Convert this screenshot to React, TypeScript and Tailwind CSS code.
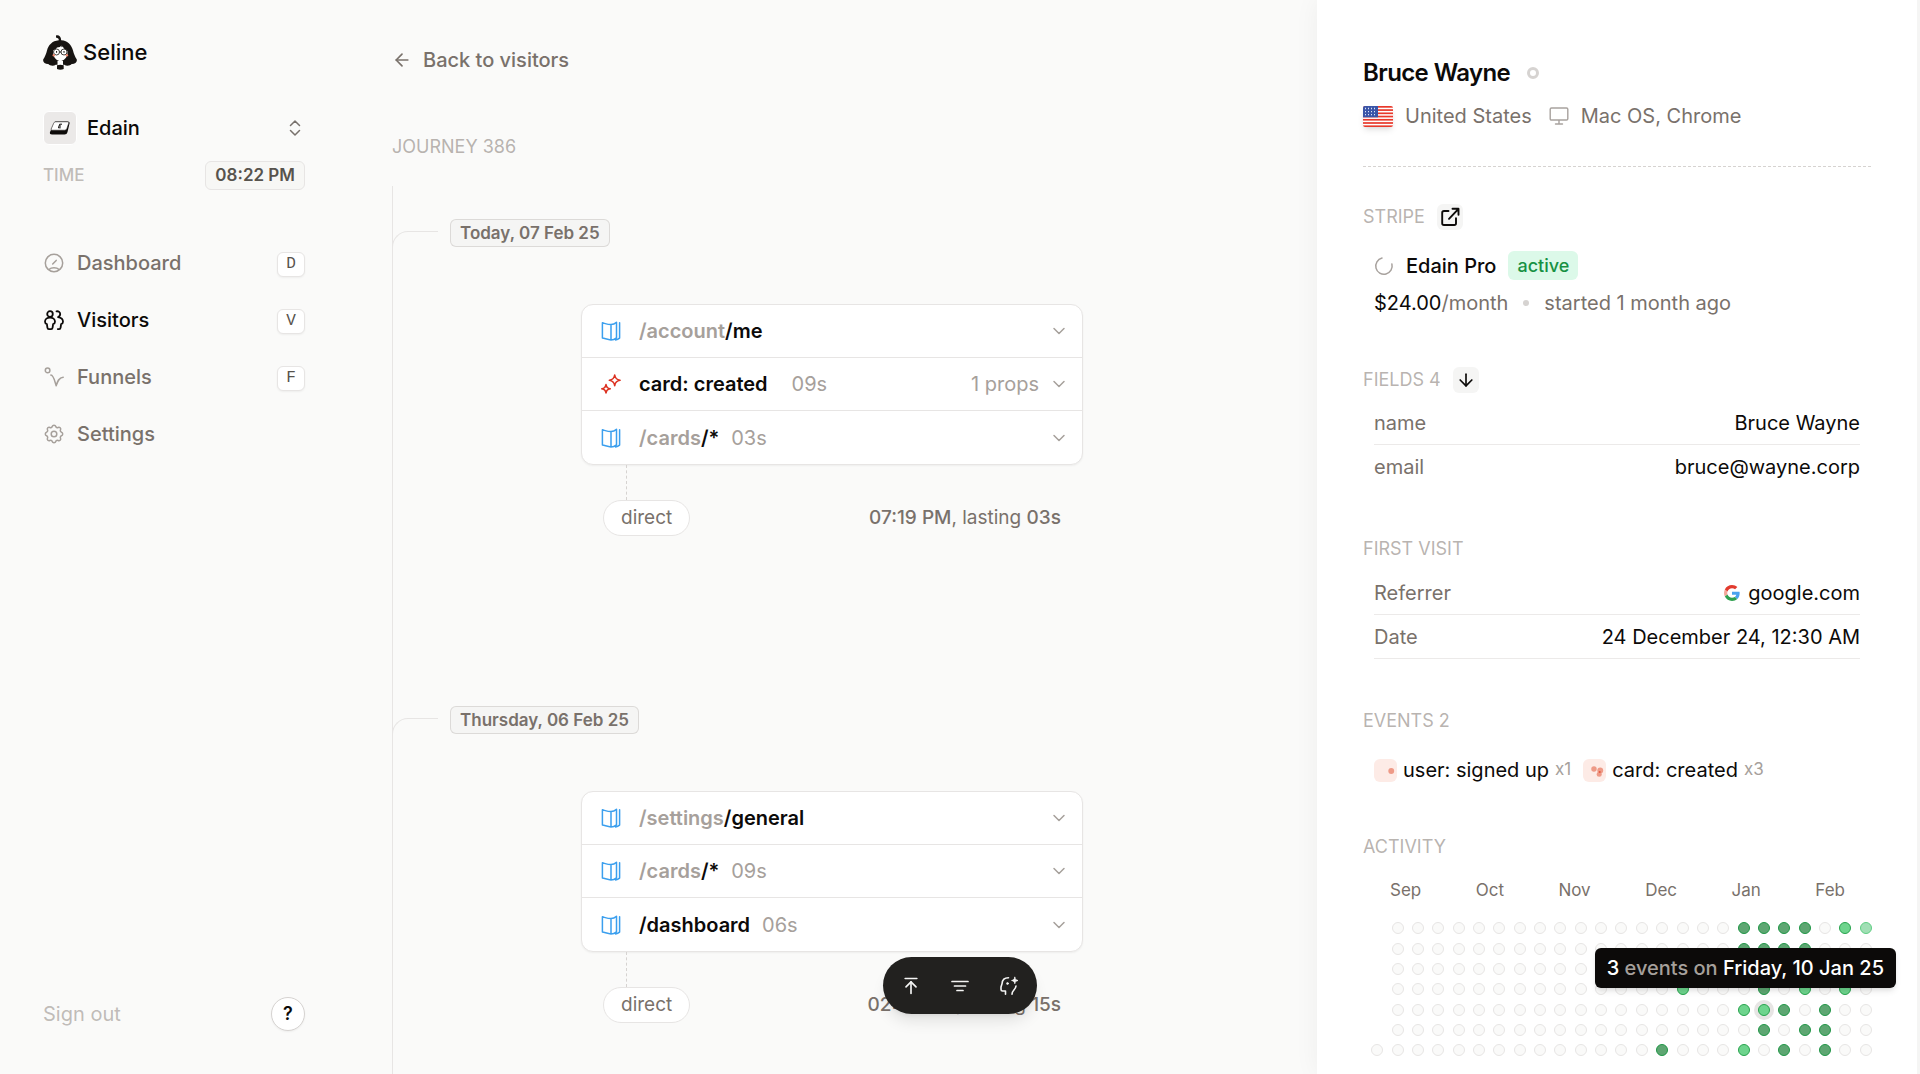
import type { ReactNode } from 'react';
import { ArrowDown, ArrowLeft, ArrowUpToLine, ChevronDown } from 'lucide-react';

type Level = '.' | '-' | 'l' | 'm' | 'd' | 'h';

interface Step {
  kind: 'page' | 'event';
  base?: string;
  name: string;
  time?: string;
  props?: string;
}

interface Day {
  label: string;
  steps: Step[];
  at: string;
  lasting: string;
}

const days: Day[] = [
  {
    label: 'Today, 07 Feb 25',
    steps: [
      { kind: 'page', base: '/account', name: '/me' },
      { kind: 'event', name: 'card: created', time: '09s', props: '1 props' },
      { kind: 'page', base: '/cards', name: '/*', time: '03s' },
    ],
    at: '07:19 PM',
    lasting: '03s',
  },
  {
    label: 'Thursday, 06 Feb 25',
    steps: [
      { kind: 'page', base: '/settings', name: '/general' },
      { kind: 'page', base: '/cards', name: '/*', time: '09s' },
      { kind: 'page', name: '/dashboard', time: '06s' },
    ],
    at: '02:45 PM',
    lasting: '15s',
  },
];

const months = ['Sep', 'Oct', 'Nov', 'Dec', 'Jan', 'Feb'];

// one string per weekday, one character per week
const activity = [
  '.-----------------dddd-ml',
  '.-----------------dddd---',
  '.------------------------',
  '.--------------m---d-m-m-',
  '.-----------------mhd-d--',
  '.------------------d-dd--',
  '--------------d---m-d-d--',
];

const levelStyles: Record<Level, string> = {
  '.': 'invisible',
  '-': 'border-stone-200 bg-stone-50',
  l: 'border-[#5fce83] bg-[#a1dfb5]',
  m: 'border-[#27a34d] bg-[#6ed48d]',
  d: 'border-[#1f9646] bg-[#5ea672]',
  h: 'border-[#27a34d] bg-[#6ed48d] ring-4 ring-stone-200',
};

function Logo() {
  return (
    <svg viewBox="0 0 34 35" className="h-[35px] w-[34px]">
      <path d="M13 .6c2.400-1 5 .6 5.200 4.600C25 5.600 28.500 10 30 15.500c.9 3.400 1.800 6 3.700 8.800.9 2.600-1.800 5-5 4.800-1.700 2-5.400 2.200-7.500.7h-8.400c-2.100 1.500-5.800 1.300-7.500-.7-3.200.2-5.900-2.200-5-4.800C2.200 21.500 3.100 18.900 4 15.500 5.400 10.300 9 5.900 15.800 5.300 15.900 3.200 14.500 3.400 13 2.600z" fill="#171412" />
      <path d="M10 15.500c1.500-.3 3-1.500 4-3l3-.5 1.300-1.500.2 1.700 1.300-.7c.7 1.800 2.200 3.500 4.700 4.500.3 3.500-.8 6.300-3 8.300-2.600 2.400-5.800 2.400-8.500 0-2.200-2-3.300-5.300-3-8.800z" fill="#fff" />
      <path d="M14.500 26H20v4.500h-5.500z" fill="#fff" />
      <circle cx="13.500" cy="17" r="3" fill="#fff" stroke="#171412" strokeWidth="0.8" />
      <circle cx="21" cy="17" r="3" fill="#fff" stroke="#171412" strokeWidth="0.8" />
      <path d="M16.500 17H18M13.600 16v1.800M21 16v1.800" stroke="#171412" />
      <circle cx="10.800" cy="20.300" r="1.200" fill="#f08a70" />
      <circle cx="23.900" cy="20.300" r="1.200" fill="#f08a70" />
      <path d="M14 30.300c2-.8 4.500-.8 6.700 0V34c-2 1-4.700 1-6.700 0z" fill="#171412" />
    </svg>
  );
}

function KeycapIcon() {
  return (
    <svg viewBox="0 0 22 16" className="w-[22px]">
      <path d="M6 1.500h12.500c1.500 0 2.300.7 2 2L18.500 12c-.4 1.700-1.500 2.500-3 2.500H3c-1.700 0-2.500-.8-2-2.500z" fill="#0c0a09" />
      <path d="M6.700 1.800h11.600c1.200 0 1.700.5 1.400 1.500l-1.900 5.500c-.3.900-1 1.400-2 1.400H3.200c-.9 0-1.300-.5-1-1.300l2.500-5.700c.3-.9 1-1.400 2-1.400z" fill="#fff" stroke="#292524" strokeWidth="0.6" />
      <path d="M13 4.200h-2.300L9.400 7.800h2.300M10.200 6H12" stroke="#0c0a09" fill="none" />
    </svg>
  );
}

function NavIcon({ children }: { children: ReactNode }) {
  return (
    <svg viewBox="0 0 20 20" className="size-5 shrink-0" fill="none" stroke="currentColor" strokeWidth="1.5" strokeLinecap="round" strokeLinejoin="round">
      {children}
    </svg>
  );
}

const nav = [
  {
    label: 'Dashboard',
    hotkey: 'D',
    icon: (
      <NavIcon>
        <circle cx="10" cy="10" r="8.700" />
        <path d="M8.700 11l3.500-3.600M5.300 16.300c2-2.200 7.400-2.200 9.400 0" />
      </NavIcon>
    ),
  },
  {
    label: 'Visitors',
    hotkey: 'V',
    active: true,
    icon: (
      <NavIcon>
        <g strokeWidth="1.8">
          <circle cx="6" cy="4" r="2.800" />
          <path d="M6 7.600c-2.900 0-5 1.700-5 4.200 0 1.200.7 2 1.900 2.300l.5 3.500c.1 1 .7 1.500 1.500 1.500h2.200c.8 0 1.400-.5 1.500-1.500l.5-3.500c1.200-.3 1.900-1.100 1.900-2.300 0-2.500-2.100-4.200-5-4.200z" />
          <path d="M12.500 1.300c2.200-.3 3.700 1 3.700 2.800 0 1.500-.9 2.600-2.200 3 3 .4 5 2.200 5 4.700 0 1.200-.7 2-1.900 2.300l-.5 3.500c-.1 1-.7 1.500-1.500 1.500h-1.300" />
        </g>
      </NavIcon>
    ),
  },
  {
    label: 'Funnels',
    hotkey: 'F',
    icon: (
      <NavIcon>
        <circle cx="3.600" cy="3.400" r="2.300" />
        <path d="M6.900 8.100c2.700.2 3.600 5.400 5.300 10.600 1.200-3.800 2.400-8.100 7-8.500" />
      </NavIcon>
    ),
  },
  {
    label: 'Settings',
    icon: (
      <NavIcon>
        <circle cx="10" cy="10" r="2.800" />
        <path d="M8.200 2.500c.5-1.600 3.100-1.600 3.600 0 .3 1 1.400 1.500 2.300 1 1.500-.8 3.200.9 2.400 2.400-.5.900 0 2 1 2.300 1.600.5 1.600 3.100 0 3.600-1 .3-1.500 1.400-1 2.300.8 1.500-.9 3.200-2.400 2.400-.9-.5-2 0-2.300 1-.5 1.600-3.100 1.600-3.600 0-.3-1-1.400-1.500-2.300-1-1.500.8-3.200-.9-2.400-2.400.5-.9 0-2-1-2.300-1.600-.5-1.600-3.100 0-3.600 1-.3 1.500-1.400 1-2.300-.8-1.500.9-3.200 2.400-2.400.9.500 2 0 2.300-1z" />
      </NavIcon>
    ),
  },
];

function PageIcon() {
  return (
    <svg viewBox="0 0 20 20" className="size-5" fill="none" stroke="#3b9fee" strokeWidth="1.5" strokeLinecap="round" strokeLinejoin="round">
      <path d="M10 3.600C7 3.600 4.400 2.600 1.400 1.800V17c3 .6 5.600 1.900 8.600 1.900M10 3.600c2 0 3.800-.7 5.500-2.300v15.500c-1.700 1.400-3.500 2.100-5.500 2.100zM18.600 1.800v15.300c-1.200 1-2.500 1.600-4 1.800" />
    </svg>
  );
}

function EventIcon() {
  return (
    <svg viewBox="0 0 20 20" className="size-5" fill="none" stroke="#dc3120" strokeWidth="1.6" strokeLinejoin="round">
      <path d="M13.700 1c.5 3.400 1.900 4.800 5.300 5.300-3.400.5-4.800 1.900-5.300 5.300-.5-3.400-1.900-4.800-5.300-5.300C11.800 5.800 13.200 4.400 13.700 1zM5 10.600c.4 2.700 1.500 3.800 4.200 4.200-2.700.4-3.800 1.500-4.200 4.200-.4-2.700-1.500-3.800-4.200-4.200 2.700-.4 3.800-1.500 4.200-4.200z" />
    </svg>
  );
}

function UsFlag() {
  return (
    <svg viewBox="0 0 30 21" className="h-[21px] w-[30px] rounded-xs shadow-md">
      <rect width="30" height="21" fill="#fff" />
      {[0, 1, 2, 3, 4, 5, 6].map((i) => (
        <rect key={i} y={i * 3.23} width="30" height="1.700" fill="#e8392b" />
      ))}
      <rect width="15" height="11.300" fill="#3a55a8" />
      <path d="M2 2.500h12M2 5.600h12M2 8.700h12" stroke="#dbe2f5" strokeWidth="1.3" strokeDasharray="1 2" />
    </svg>
  );
}

function GoogleIcon() {
  return (
    <svg viewBox="0 0 48 48" className="size-4">
      <path fill="#4aa3f0" d="M46.980 24.550c0-1.570-.15-3.090-.38-4.550H24v9.020h12.940c-.58 2.960-2.260 5.480-4.780 7.180l7.730 6c4.510-4.180 7.090-10.360 7.090-17.650z" />
      <path fill="#f3a89b" d="M10.530 28.590c-.48-1.450-.76-2.990-.76-4.590s.27-3.140.76-4.590l-7.980-6.190C.92 16.460 0 20.120 0 24c0 3.880.92 7.540 2.560 10.780l7.970-6.190z" />
      <path fill="#2ea04f" d="M24 48c6.480 0 11.930-2.130 15.890-5.810l-7.730-6c-2.150 1.450-4.920 2.300-8.160 2.300-6.260 0-11.570-4.220-13.470-9.910l-7.980 6.190C6.510 42.620 14.620 48 24 48z" />
      <path fill="#e23b2e" d="M24 9.500c3.540 0 6.710 1.220 9.210 3.600l6.850-6.850C35.900 2.380 30.470 0 24 0 14.620 0 6.510 5.380 2.560 13.220l7.980 6.190C12.430 13.720 17.740 9.500 24 9.500z" />
    </svg>
  );
}

function Sidebar() {
  return (
    <aside className="flex w-[350px] shrink-0 flex-col pt-[34px] pr-[45px] pb-[43px] pl-[43px]">
      <a href="#" className="flex items-center gap-1.5 text-[22px] leading-9 font-medium text-stone-950">
        <Logo />
        Seline
      </a>

      <button className="mt-[41px] flex h-[34px] items-center text-xl font-medium text-stone-950">
        <span className="mr-2.5 flex size-[34px] items-center justify-center rounded-md border border-white bg-stone-200/80">
          <KeycapIcon />
        </span>
        Edain
        <svg viewBox="0 0 12 16" className="mr-1 ml-auto h-4 w-3" fill="none" stroke="#78716c" strokeWidth="1.5" strokeLinecap="round" strokeLinejoin="round">
          <path d="M1.500 5.500L6 1l4.500 4.500M1.500 10.500L6 15l4.500-4.500" />
        </svg>
      </button>

      <div className="mt-4 flex items-center justify-between">
        <span className="text-[17px] font-medium text-stone-400/70">TIME</span>
        <span className="rounded-md border border-stone-200 bg-stone-100/70 px-[9px] text-[17px] leading-[27px] font-semibold text-stone-600">
          08:22 PM
        </span>
      </div>

      <nav className="mt-[59px] flex flex-col gap-[29px]">
        {nav.map((item) => (
          <a
            key={item.label}
            href="#"
            className={`flex h-7 items-center gap-[13px] pl-px text-xl font-medium ${item.active ? 'text-stone-950' : 'text-stone-500'}`}
          >
            <span className={item.active ? '' : 'text-stone-400'}>{item.icon}</span>
            {item.label}
            {item.hotkey && (
              <kbd className="mt-0.5 ml-auto flex h-[25px] w-7 items-center justify-center rounded-md border border-stone-200 bg-white font-['Liberation_Mono',monospace] text-base font-normal text-stone-600 shadow-xs">
                {item.hotkey}
              </kbd>
            )}
          </a>
        ))}
      </nav>

      <div className="mt-auto flex items-center justify-between">
        <button className="text-xl text-stone-400/70">Sign out</button>
        <button className="flex size-[34px] items-center justify-center rounded-full border border-stone-300 bg-white text-lg font-semibold text-stone-950 shadow-xs">
          ?
        </button>
      </div>
    </aside>
  );
}

function StepRow({ step }: { step: Step }) {
  return (
    <button className="flex h-[53px] w-full items-center pr-[13px] pl-[19px] text-xl">
      {step.kind === 'page' ? <PageIcon /> : <EventIcon />}
      <span className="ml-[18px] font-semibold text-stone-950">
        <span className="text-stone-400">{step.base}</span>
        {step.name}
      </span>
      {step.time && (
        <span className={`text-stone-400 ${step.kind === 'event' ? 'ml-6' : 'ml-3'}`}>{step.time}</span>
      )}
      <span className="ml-auto text-stone-400">{step.props}</span>
      <ChevronDown className="ml-2.5 size-5 text-stone-400" strokeWidth={1.8} />
    </button>
  );
}

function DayGroup({ day }: { day: Day }) {
  return (
    <section className="mb-[170px]">
      <div className="flex items-start">
        <span className="mt-3 mr-3 -ml-px h-5 w-[46px] rounded-tl-2xl border-t border-l border-stone-200" />
        <h3 className="rounded-md border border-stone-300/80 bg-stone-100 px-[9px] text-[17px] leading-[26px] font-semibold text-stone-500">
          {day.label}
        </h3>
      </div>
      <div className="mx-auto mt-[53px] max-w-[502px]">
        <div className="divide-y divide-stone-200 rounded-xl border border-stone-200 bg-white shadow-xs">
          {day.steps.map((step) => (
            <StepRow key={step.name} step={step} />
          ))}
        </div>
        <div className="ml-[45px] h-[35px] border-l border-dashed border-stone-300" />
        <div className="flex items-center justify-between px-[22px] text-[19px] text-stone-500">
          <span className="rounded-full border border-stone-200 bg-white px-[17px] leading-[34px]">direct</span>
          <span>
            <span className="font-medium">{day.at}</span>, lasting <span className="font-medium">{day.lasting}</span>
          </span>
        </div>
      </div>
    </section>
  );
}

function Journey() {
  return (
    <main className="flex min-w-0 flex-1 flex-col overflow-hidden pt-[46px] pr-[46px] pl-[42px]">
      <a href="#" className="flex h-7 items-center gap-[11px] text-xl font-medium text-stone-500">
        <ArrowLeft className="size-5" strokeWidth={2} />
        Back to visitors
      </a>
      <h2 className="mt-[63px] text-lg leading-5 text-stone-400/80">JOURNEY 386</h2>
      <div className="mt-[29px] border-l border-stone-200 pt-[33px]">
        {days.map((day) => (
          <DayGroup key={day.label} day={day} />
        ))}
      </div>
    </main>
  );
}

function Toolbar() {
  return (
    <div className="fixed bottom-[60px] left-1/2 flex h-[57px] -translate-x-1/2 items-center gap-[29px] rounded-full bg-[#22211f] px-[18px] text-stone-100 shadow-lg">
      <button aria-label="Scroll to top">
        <ArrowUpToLine className="size-5" strokeWidth={2} />
      </button>
      <button aria-label="Filter">
        <svg viewBox="0 0 20 20" className="size-5" stroke="currentColor" strokeWidth="1.7" strokeLinecap="round">
          <path d="M2 5.500h16M4.500 10h11M7 14.500h6" />
        </svg>
      </button>
      <button aria-label="Ask AI">
        <svg viewBox="0 0 20 20" className="size-5" fill="none" stroke="currentColor" strokeWidth="1.6" strokeLinecap="round" strokeLinejoin="round">
          <path d="M9.500 1.800C5.700 1.800 3.300 4.200 3.100 7.500L2 11v2.500c0 1 .6 1.500 1.500 1.500H6.500v3.200M13 18.200c0-4 3.600-4.200 4-8.200" />
          <path d="M15.800 1.300c.4 2 1.200 2.800 3.200 3.200-2 .4-2.800 1.200-3.200 3.200-.4-2-1.200-2.800-3.200-3.200 2-.4 2.800-1.200 3.200-3.200z" fill="currentColor" strokeWidth="0.8" />
          <circle cx="8.500" cy="7.500" r="1" fill="currentColor" strokeWidth="0.6" />
        </svg>
      </button>
    </div>
  );
}

function SectionTitle({ children }: { children: ReactNode }) {
  return <h3 className="text-lg leading-5 text-stone-400/80">{children}</h3>;
}

function Field({ label, border = true, children }: { label: string; border?: boolean; children: ReactNode }) {
  return (
    <div className={`flex h-11 items-center justify-between border-b ${border ? 'border-stone-200/80' : 'border-transparent'}`}>
      <dt className="text-stone-500">{label}</dt>
      <dd className="flex items-center gap-2 text-stone-950">{children}</dd>
    </div>
  );
}

function Activity() {
  return (
    <section className="mt-[55px]">
      <SectionTitle>ACTIVITY</SectionTitle>
      <div className="mt-[23px] mr-[26px] ml-[27px] flex justify-between text-[17px] leading-5 text-stone-500">
        {months.map((month) => (
          <span key={month}>{month}</span>
        ))}
      </div>
      <div className="relative mt-[18px] -mr-[5px] ml-1">
        <div className="grid grid-cols-[repeat(25,minmax(0,1fr))]">
          {activity.flatMap((row, y) =>
            row.split('').map((level, x) => (
              <span key={`${x}-${y}`} className="flex aspect-square items-center justify-center">
                <span className={`size-3 rounded-full border ${levelStyles[level as Level]}`} />
              </span>
            )),
          )}
        </div>
        <div
          role="tooltip"
          className="absolute top-[30px] -right-5 rounded-md bg-stone-950 px-3 text-xl leading-10 font-medium whitespace-nowrap text-white shadow-md"
        >
          3 <span className="text-stone-400">events on</span> Friday, 10 Jan 25
        </div>
      </div>
    </section>
  );
}

function VisitorPanel() {
  return (
    <aside className="w-[603px] shrink-0 border-r-[3px] border-stone-100 bg-white px-[46px] pt-[58px] text-xl shadow-[0_0_24px_rgba(0,0,0,0.05)]">
      <div className="flex h-[30px] items-center gap-[17px]">
        <h1 className="text-2xl font-semibold tracking-tight text-stone-950">Bruce Wayne</h1>
        <span className="size-3 rounded-full border-[3px] border-stone-300" />
      </div>
      <div className="mt-4 flex h-6 items-center text-stone-500">
        <UsFlag />
        <span className="ml-3">United States</span>
        <svg viewBox="0 0 20 20" className="ml-[17px] size-5" fill="none" stroke="#a8a29e" strokeWidth="1.4" strokeLinecap="round" strokeLinejoin="round">
          <path d="M2.500 2h15c.8 0 1.300.5 1.300 1.300v9.400c0 .8-.5 1.300-1.300 1.300h-15c-.8 0-1.300-.5-1.300-1.300V3.300C1.200 2.500 1.700 2 2.500 2zM10 14v4M6.500 18h7" />
        </svg>
        <span className="ml-3">Mac OS, Chrome</span>
      </div>

      <hr className="mt-[38px] border-dashed border-stone-300" />

      <section className="mt-[37px]">
        <div className="flex items-center gap-3">
          <SectionTitle>STRIPE</SectionTitle>
          <button aria-label="Open in Stripe" className="flex size-[26px] items-center justify-center rounded-md bg-stone-100 text-stone-950">
            <svg viewBox="0 0 20 20" className="size-5" fill="none" stroke="currentColor" strokeWidth="1.9" strokeLinecap="round" strokeLinejoin="round">
              <path d="M8.500 4H4c-1 0-1.800.8-1.800 1.800v10.400c0 1 .8 1.800 1.800 1.800h10.200c1 0 1.800-.8 1.800-1.800v-5M12.500 1.800h6v6M18 2.300l-9 9.500" />
            </svg>
          </button>
        </div>
        <div className="mt-[21px] ml-[11px] flex h-[29px] items-center">
          <svg viewBox="0 0 20 20" className="size-5" fill="none" stroke="#a8a29e" strokeWidth="1.5" strokeLinecap="round">
            <path d="M8 2.100A8.200 8.200 0 1 0 17.900 8" />
          </svg>
          <span className="ml-3 font-medium text-stone-950">Edain Pro</span>
          <span className="ml-3 rounded-md bg-[#dcf9e9] px-[9px] text-lg leading-[29px] font-medium text-[#179143]">active</span>
        </div>
        <div className="mt-[11px] ml-[11px] flex h-6 items-center text-stone-500">
          <span className="text-stone-950">$24.00</span>/month
          <span className="mx-[15px] size-1.5 rounded-full bg-stone-300" />
          started 1 month ago
        </div>
      </section>

      <section className="mt-[52px]">
        <div className="flex items-center gap-3">
          <SectionTitle>FIELDS 4</SectionTitle>
          <button aria-label="Sort fields" className="flex size-[26px] items-center justify-center rounded-md bg-stone-100 text-stone-950">
            <ArrowDown className="size-5" strokeWidth={2} />
          </button>
        </div>
        <dl className="mx-[11px] mt-2">
          <Field label="name">Bruce Wayne</Field>
          <Field label="email" border={false}>bruce@wayne.corp</Field>
        </dl>
      </section>

      <section className="mt-[50px]">
        <SectionTitle>FIRST VISIT</SectionTitle>
        <dl className="mx-[11px] mt-3">
          <Field label="Referrer">
            <GoogleIcon />
            google.com
          </Field>
          <Field label="Date">24 December 24, 12:30 AM</Field>
        </dl>
      </section>

      <section className="mt-[52px]">
        <SectionTitle>EVENTS 2</SectionTitle>
        <ul className="mt-[27px] ml-[11px] flex h-6 items-center gap-3 text-stone-950">
          <li className="flex items-center gap-1.5">
            <svg viewBox="0 0 22 22" className="size-[23px] rounded-md bg-[#fdebe6]">
              <circle cx="16.500" cy="11.500" r="2.800" fill="#ee9a87" />
            </svg>
            user: signed up
            <span className="text-[17px] text-stone-400">x1</span>
          </li>
          <li className="flex items-center gap-1.5">
            <svg viewBox="0 0 22 22" className="size-[23px] rounded-md bg-[#fdebe6]">
              <g fill="#ee9a87">
                <circle cx="10.500" cy="9.500" r="2.600" />
                <circle cx="16.500" cy="11" r="2.800" />
                <circle cx="15.500" cy="14.500" r="2.400" />
              </g>
              <circle cx="16" cy="12.500" r="1" fill="#e4573d" />
            </svg>
            card: created
            <span className="text-[17px] text-stone-400">x3</span>
          </li>
        </ul>
      </section>

      <Activity />
    </aside>
  );
}

export default function App() {
  return (
    <div className="flex h-screen overflow-hidden bg-stone-50 font-['Inter',sans-serif]">
      <Sidebar />
      <Journey />
      <VisitorPanel />
      <Toolbar />
    </div>
  );
}
